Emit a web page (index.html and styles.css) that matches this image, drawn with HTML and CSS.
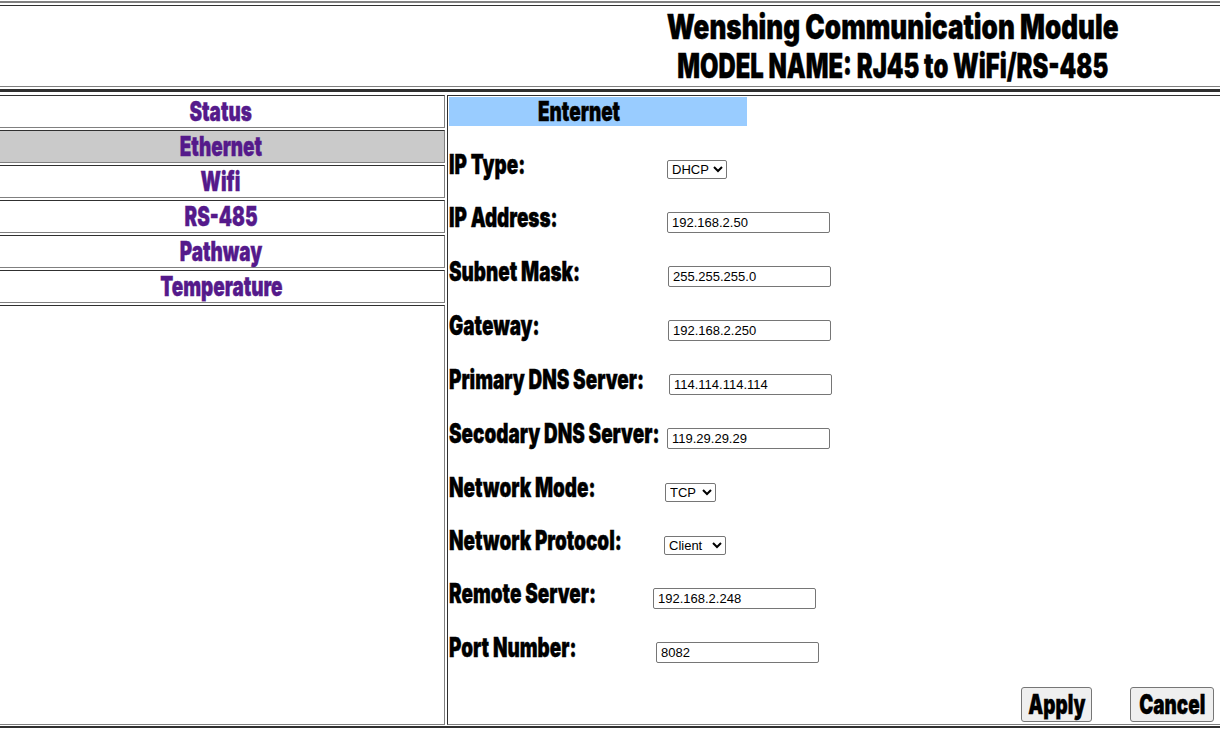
FILE: index.html
```html
<!DOCTYPE html>
<html lang="en">
<head>
  <meta charset="UTF-8">
  <title>Wenshing Communication Module</title>
  <link rel="stylesheet" href="styles.css">
</head>
<body>

  <!-- Title frame -->
  <div class="top-frame">
    <div class="title-box">
      <h1 class="line-one"><span>Wenshing Communication Module</span></h1>
      <h1 class="line-two"><span>MODEL NAME: RJ45 to WiFi/RS-485</span></h1>
    </div>
  </div>

  <div class="frames">
    <!-- Menu frame -->
    <div class="menu-frame">
      <a class="menu-item" href="#"><span>Status</span></a>
      <a class="menu-item current" href="#"><span>Ethernet</span></a>
      <a class="menu-item" href="#"><span>Wifi</span></a>
      <a class="menu-item" href="#"><span>RS-485</span></a>
      <a class="menu-item" href="#"><span>Pathway</span></a>
      <a class="menu-item" href="#"><span>Temperature</span></a>
      <div class="menu-rest"></div>
    </div>

    <!-- Settings frame -->
    <div class="main-frame">
      <div class="section-title"><span>Enternet</span></div>
      <form class="settings">
        <div class="row r-iptype">
          <label><span>IP Type:</span></label>
          <select class="sel-dhcp"><option>DHCP</option></select>
        </div>
        <div class="row r-ip">
          <label><span>IP Address:</span></label>
          <input type="text" value="192.168.2.50">
        </div>
        <div class="row r-mask">
          <label><span>Subnet Mask:</span></label>
          <input type="text" value="255.255.255.0">
        </div>
        <div class="row r-gw">
          <label><span>Gateway:</span></label>
          <input type="text" value="192.168.2.250">
        </div>
        <div class="row r-dns1">
          <label><span>Primary DNS Server:</span></label>
          <input type="text" value="114.114.114.114">
        </div>
        <div class="row r-dns2">
          <label><span>Secodary DNS Server:</span></label>
          <input type="text" value="119.29.29.29">
        </div>
        <div class="row r-mode">
          <label><span>Network Mode:</span></label>
          <select class="sel-tcp"><option>TCP</option></select>
        </div>
        <div class="row r-proto">
          <label><span>Network Protocol:</span></label>
          <select class="sel-client"><option>Client</option></select>
        </div>
        <div class="row r-remote">
          <label><span>Remote Server:</span></label>
          <input type="text" value="192.168.2.248">
        </div>
        <div class="row r-port">
          <label><span>Port Number:</span></label>
          <input type="text" value="8082">
        </div>
        <div class="buttons">
          <button type="button" class="btn-apply"><span>Apply</span></button>
          <button type="button" class="btn-cancel"><span>Cancel</span></button>
        </div>
      </form>
    </div>
  </div>

  <div class="bottom-rule"></div>

</body>
</html>
```

FILE: styles.css
```css
/* Basic Styling */
body {
  margin: 0;
  background-color: #fff;
  color: #000;
  font-family: Inter, "Liberation Sans", sans-serif;
  font-weight: 900;
  overflow: hidden;
}

/* The headings are a heavy condensed face, squeezed from Inter */
h1 span,
.menu-item span,
.section-title span,
.row label span,
.buttons span {
  display: inline-block;
  white-space: nowrap;
  transform: scaleX(0.7);
  -webkit-text-stroke: 0.4px currentColor;
}

/* Title frame */
.top-frame {
  margin-top: 1px;
  border-top: 2px solid #808080;
  padding: 2px 0;
  border-bottom: 3px solid #303030;
}

.title-box {
  height: 82px;
  box-sizing: border-box;
  border-top: 1px solid #303030;
  border-bottom: 1px solid #808080;
  padding: 1px 0 0 566px;
  text-align: center;
}

h1 {
  margin: 0;
  font-size: 34px;
  line-height: 39px;
  font-weight: 900;
}

h1.line-one span { transform: scaleX(0.767); }
h1.line-two span { transform: scaleX(0.7); }

/* Menu and settings */
.frames {
  display: flex;
  height: 630px;
  margin-top: 3px;
}

.menu-frame {
  width: 445px;
  display: flex;
  flex-direction: column;
  gap: 2px;
}

.menu-item {
  height: 33px;
  flex: none;
  box-sizing: border-box;
  padding-right: 2px;
  border-top: 1px solid #303030;
  border-right: 1px solid #808080;
  border-bottom: 1px solid #808080;
  text-align: center;
  font-size: 27px;
  line-height: 31px;
  color: #551a8b;
  text-decoration: none;
}

.menu-item.current {
  background-color: #cacaca;
}

.menu-rest {
  flex: 1;
  border-top: 1px solid #303030;
  border-right: 1px solid #808080;
  border-bottom: 1px solid #808080;
}

.main-frame {
  flex: 1;
  margin-left: 2px;
  border-top: 1px solid #303030;
  border-left: 1px solid #303030;
  border-bottom: 1px solid #808080;
  padding-left: 1px;
}

.section-title {
  width: 298px;
  height: 29px;
  margin-top: 1px;
  background-color: #99ccff;
  padding-left: 89px;
  box-sizing: border-box;
  font-size: 27px;
  line-height: 29px;
}

.section-title span {
  transform-origin: left center;
}

.settings {
  display: flex;
  flex-direction: column;
}

.row {
  height: 54px;
  display: flex;
  align-items: flex-start;
}

.row label {
  flex: 0 0 218px;
  min-width: 0;
  font-size: 27px;
  line-height: 30px;
  white-space: nowrap;
}

.row label span {
  transform-origin: left center;
}

.row input,
.row select {
  font-family: "Liberation Sans", Arial, sans-serif;
  font-size: 13px;
  font-weight: normal;
  box-sizing: border-box;
  background-color: #fff;
  color: #000;
  border: 1px solid #767676;
  border-radius: 2px;
}

.row input {
  width: 163px;
  height: 21px;
  padding: 1px 4px;
  margin-top: 9px;
}

.row select {
  height: 19px;
  margin-top: 10px;
}

.r-iptype { margin-top: 24px; height: 53px; }
.r-mask label, .r-gw label { flex-basis: 219px; }
.r-dns1 label { flex-basis: 220px; }
.r-mode { height: 53px; }
.r-mode label { flex-basis: 216px; }
.r-proto { height: 53px; }
.r-proto label { flex-basis: 215px; }
.r-remote label { flex-basis: 204px; }
.r-port label { flex-basis: 207px; }

.sel-dhcp { width: 60px; }
.sel-tcp { width: 51px; }
.sel-client { width: 62px; }

.buttons {
  display: flex;
  justify-content: flex-end;
  gap: 38px;
  padding-right: 6px;
}

.buttons button {
  height: 35px;
  font-family: inherit;
  font-size: 27px;
  font-weight: 900;
  line-height: 30px;
  padding: 0;
  background-color: #efefef;
  color: #000;
  border: 1px solid #767676;
  border-radius: 3px;
  overflow: hidden;
}

/* the squeezed text keeps its full width in layout, so pull it back in */
.buttons span {
  margin: 0 -30px;
}

.btn-apply { width: 71px; }
.btn-cancel { width: 84px; }

.bottom-rule {
  margin-top: 1px;
  border-top: 2px solid #303030;
}
```
